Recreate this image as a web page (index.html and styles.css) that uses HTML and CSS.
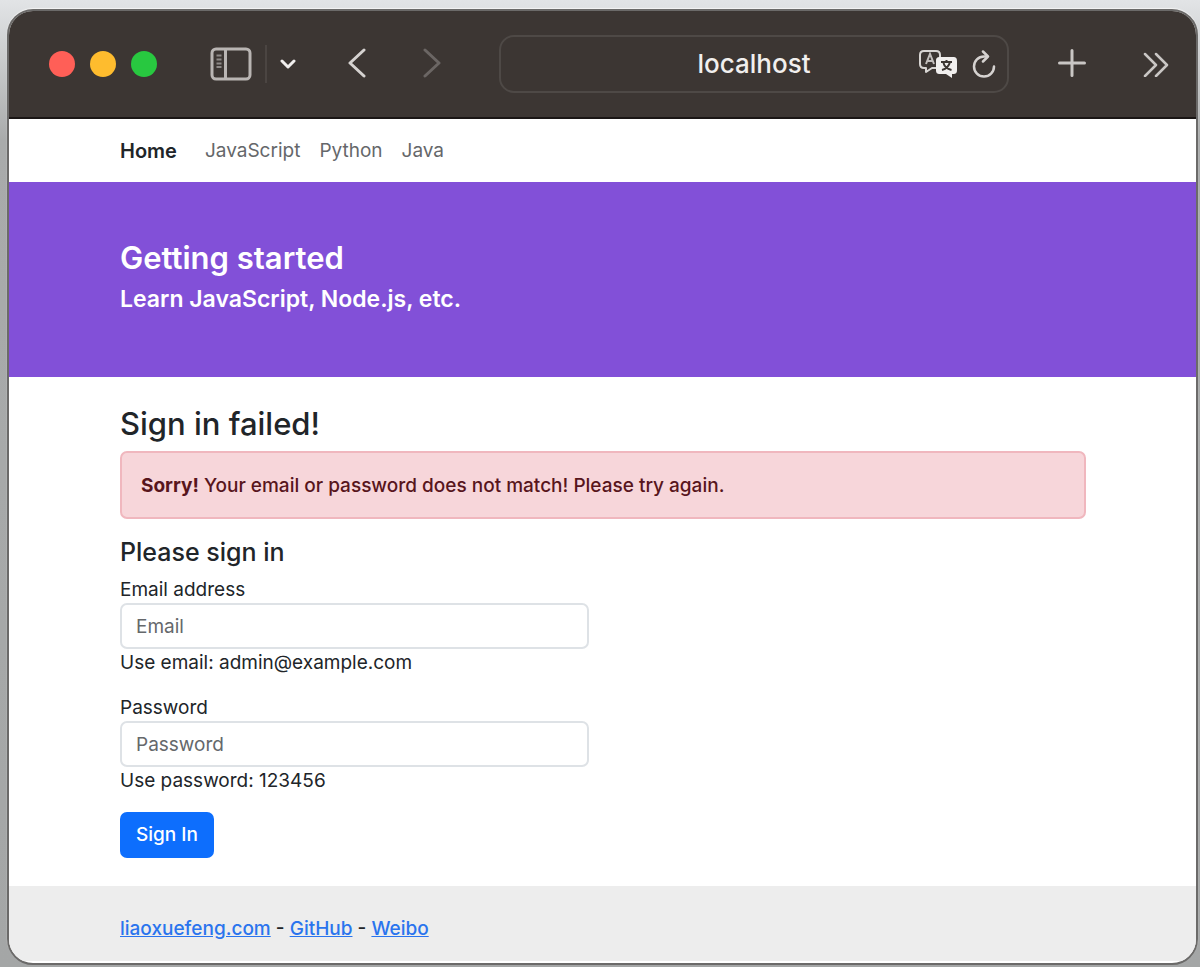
FILE: index.html
```html
<!DOCTYPE html>
<html lang="en">
  <head>
    <meta charset="UTF-8" />
    <meta name="viewport" content="width=device-width, initial-scale=1.0" />
    <title>Sign In</title>
    <link rel="stylesheet" href="styles.css">
  </head>
  <body>
    <div class="window">
      <div class="toolbar">
        <div class="lights">
          <span class="light red"></span>
          <span class="light yellow"></span>
          <span class="light green"></span>
        </div>
        <div class="sidebar-tools">
          <button class="tool" aria-label="Sidebar">
            <svg width="42" height="34" viewBox="0 0 42 34" fill="none" stroke="#b9b5b3" stroke-width="3">
              <rect x="2" y="2" width="38" height="30" rx="4" />
              <path d="M15.500 2v30" />
              <path d="M6.500 8.500h5M6.500 12.500h5M6.500 16.500h5M6.500 20h5" stroke-width="2" stroke="#8e8a88" />
            </svg>
          </button>
          <span class="divider"></span>
          <button class="tool" aria-label="Tab groups">
            <svg width="16" height="12" viewBox="0 0 16 12" fill="none" stroke="#f1efee" stroke-width="3" stroke-linecap="round" stroke-linejoin="round">
              <path d="M2 3l6 6 6-6" />
            </svg>
          </button>
        </div>
        <div class="history">
          <button class="tool" aria-label="Back">
            <svg width="20" height="32" viewBox="0 0 20 32" fill="none" stroke="#d5d2d0" stroke-width="3" stroke-linecap="round" stroke-linejoin="round">
              <path d="M17 2L3 15l14 13" />
            </svg>
          </button>
          <button class="tool" aria-label="Forward">
            <svg width="20" height="32" viewBox="0 0 20 32" fill="none" stroke="#6b6664" stroke-width="3" stroke-linecap="round" stroke-linejoin="round">
              <path d="M3 2l14 13L3 28" />
            </svg>
          </button>
        </div>
        <div class="address">
          <span class="host">localhost</span>
          <button class="tool" aria-label="Translate">
            <svg width="40" height="30" viewBox="0 0 40 30" fill="none">
              <path d="M18 19h-4l-6 4v-4H6c-3 0-4-1-4-4V6c0-3 1-4 4-4h12c3 0 4 1 4 4v3" stroke="#d8d5d3" stroke-width="2" stroke-linejoin="round" />
              <path d="M8 15l4-10 4 10M9.500 12h5" stroke="#c2bebc" stroke-width="2" />
              <path d="M22 8h13c3 0 4 1 4 4v9c0 3-1 4-4 4h-1v4l-6-4h-6c-3 0-4-1-4-4v-9c0-3 1-4 4-4z" fill="#f1efee" />
              <path d="M23 13h11M28.500 11v2M32 13c-1 4-4 7-8 8M25.500 14c1 4 4 6 8 7" stroke="#3c3633" stroke-width="2" />
            </svg>
          </button>
          <button class="tool" aria-label="Reload">
            <svg width="24" height="28" viewBox="0 0 24 28" fill="none" stroke="#d5d2d0" stroke-width="2.500" stroke-linecap="round" stroke-linejoin="round">
              <path d="M14 6.500h-2a10 10 0 1 0 10 10" />
              <path d="M11 1.500l5 5-5 5" />
            </svg>
          </button>
        </div>
        <button class="tool" aria-label="New tab">
          <svg width="28" height="30" viewBox="0 0 28 30" fill="none" stroke="#c9c6c4" stroke-width="3" stroke-linecap="round">
            <path d="M14 1.500v25M1.500 14h25" />
          </svg>
        </button>
        <button class="tool more" aria-label="More">
          <svg width="28" height="26" viewBox="0 0 28 26" fill="none" stroke="#c9c6c4" stroke-width="2.500" stroke-linecap="round" stroke-linejoin="round">
            <path d="M3 3l11 11L3 25M14 3l11 11-11 11" />
          </svg>
        </button>
      </div>

      <nav class="navbar">
        <a class="brand" href="#">Home</a>
        <a href="#">JavaScript</a>
        <a href="#">Python</a>
        <a href="#">Java</a>
      </nav>

      <header class="hero">
        <h1>Getting started</h1>
        <p>Learn JavaScript, Node.js, etc.</p>
      </header>

      <main class="content">
        <h2>Sign in failed!</h2>
        <div class="alert" role="alert">
          <strong>Sorry!</strong> Your email or password does not match! Please try again.
        </div>
        <form class="signin">
          <h3>Please sign in</h3>
          <div class="field">
            <label for="email">Email address</label>
            <input type="email" id="email" name="email" placeholder="Email" />
            <small>Use email: admin@example.com</small>
          </div>
          <div class="field">
            <label for="password">Password</label>
            <input type="password" id="password" name="password" placeholder="Password" />
            <small>Use password: 123456</small>
          </div>
          <button class="submit-btn" type="submit">Sign In</button>
        </form>
      </main>

      <footer class="footer">
        <a href="#">liaoxuefeng.com</a> - <a href="#">GitHub</a> - <a href="#">Weibo</a>
      </footer>
    </div>
  </body>
</html>
```
FILE: styles.css
```css
* {
  padding: 0;
  margin: 0;
  box-sizing: border-box;
}

body {
  display: flex;
  min-height: 100vh;
  padding: 9px 2px 3px 7px;
  font-family: "Inter", "Liberation Sans", sans-serif;
  font-size: 19px;
  line-height: 28px;
  color: #212529;
  background: linear-gradient(#e2e4e6, #a9abab 140px, #a4a6a6);
}

.window {
  flex: 1;
  display: flex;
  flex-direction: column;
  padding-bottom: 2px;
  border: 2px solid #6b6a69;
  border-radius: 26px;
  overflow: hidden;
  background-color: #fff;
  box-shadow: 0 -1px 1px #f4f4f4;
}

.toolbar {
  display: flex;
  align-items: center;
  height: 108px;
  padding: 0 26px 0 40px;
  background-color: #3c3633;
  border-bottom: 2px solid #1a1615;
}

.tool {
  display: flex;
  background: none;
  border: none;
  cursor: pointer;
}

.lights,
.sidebar-tools,
.history {
  display: flex;
  align-items: center;
}

.lights {
  gap: 15px;
}

.light {
  width: 26px;
  height: 26px;
  border-radius: 50%;
}

.red {
  background-color: #ff5f57;
}

.yellow {
  background-color: #febc2e;
}

.green {
  background-color: #28c840;
}

.sidebar-tools {
  gap: 13px;
  margin-left: 53px;
}

.divider {
  width: 2px;
  height: 38px;
  background-color: #4b4542;
}

.history {
  gap: 55px;
  margin-left: 51px;
}

.address {
  flex: 1;
  display: flex;
  align-items: center;
  gap: 14px;
  height: 58px;
  margin: 0 49px 0 57px;
  padding: 0 11px;
  border: 2px solid #4e4946;
  border-radius: 15px;
}

.host {
  flex: 1;
  padding-left: 92px;
  font-size: 26px;
  font-weight: 500;
  text-align: center;
  color: #f1efee;
}

.more {
  margin-left: 56px;
}

.navbar,
.hero,
.content,
.footer {
  padding-left: 111px;
  padding-right: 110px;
}

.navbar {
  display: flex;
  align-items: center;
  gap: 19px;
  height: 63px;
}

.navbar a {
  color: #65676a;
  text-decoration: none;
}

.navbar .brand {
  margin-right: 9px;
  font-size: 20px;
  font-weight: 600;
  color: #212529;
}

.hero {
  height: 195px;
  padding-top: 56px;
  color: #fff;
  background-color: #8250d8;
}

h1,
h2 {
  font-size: 31px;
  font-weight: 500;
  line-height: 40px;
}

h1,
.hero p {
  font-weight: 600;
}

.hero p {
  margin-top: 7px;
  font-size: 23px;
}

.content {
  flex: 1;
  padding-top: 27px;
  padding-bottom: 28px;
}

.alert {
  margin-top: 7px;
  padding: 19px 19px 17px;
  border: 2px solid #f0b7be;
  border-radius: 7px;
  font-weight: 500;
  color: #58151c;
  background-color: #f7d6da;
}

.signin {
  width: 50%;
  padding-right: 14px;
}

h3 {
  margin: 19px 0 10px;
  font-size: 25px;
  font-weight: 500;
}

.field {
  display: flex;
  flex-direction: column;
  margin-bottom: 18px;
}

.field label,
.field small {
  font-size: 19px;
  line-height: 27px;
}

.field input {
  width: 100%;
  height: 46px;
  padding: 0 14px;
  border: 2px solid #dee2e6;
  border-radius: 7px;
  font: inherit;
}

.field input::placeholder {
  color: #65686b;
}

.submit-btn {
  height: 46px;
  padding: 0 16px;
  border: none;
  border-radius: 7px;
  font: inherit;
  font-weight: 500;
  color: #fff;
  background-color: #0d6efd;
  cursor: pointer;
}

.footer {
  padding-top: 29px;
  padding-bottom: 18px;
  font-weight: 500;
  background-color: #ededed;
}

.footer a {
  color: #2a74ee;
}
```
